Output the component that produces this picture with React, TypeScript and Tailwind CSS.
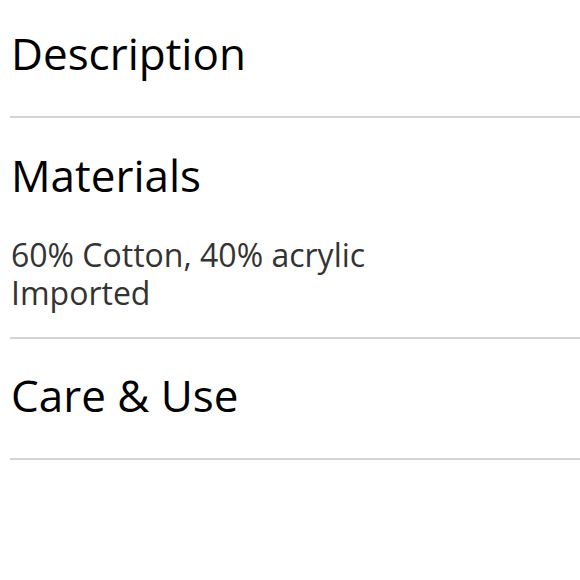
export default function App() {
  return (
    <div className="w-[580px] h-[580px] bg-white pl-[10px] overflow-hidden" style={{ fontFamily: '"Open Sans", sans-serif' }}>
      <div className="border-b-2 border-[#d4d4d4] pt-[27px] pb-[37px]">
        <h2 className="text-[44px] leading-[52px] text-black pl-px">Description</h2>
      </div>
      <div className="border-b-2 border-[#d4d4d4] pt-[31px] pb-[25px]">
        <h2 className="text-[44px] leading-[52px] text-black pl-px">Materials</h2>
        <div className="mt-[35px] text-[32px] leading-[38px] text-[#333] pl-px">
          <p>60% Cotton, 40% acrylic</p>
          <p>Imported</p>
        </div>
      </div>
      <div className="border-b-2 border-[#d4d4d4] pt-[30px] pb-[37px]">
        <h2 className="text-[44px] leading-[52px] text-black pl-px">Care &amp; Use</h2>
      </div>
    </div>
  );
}
